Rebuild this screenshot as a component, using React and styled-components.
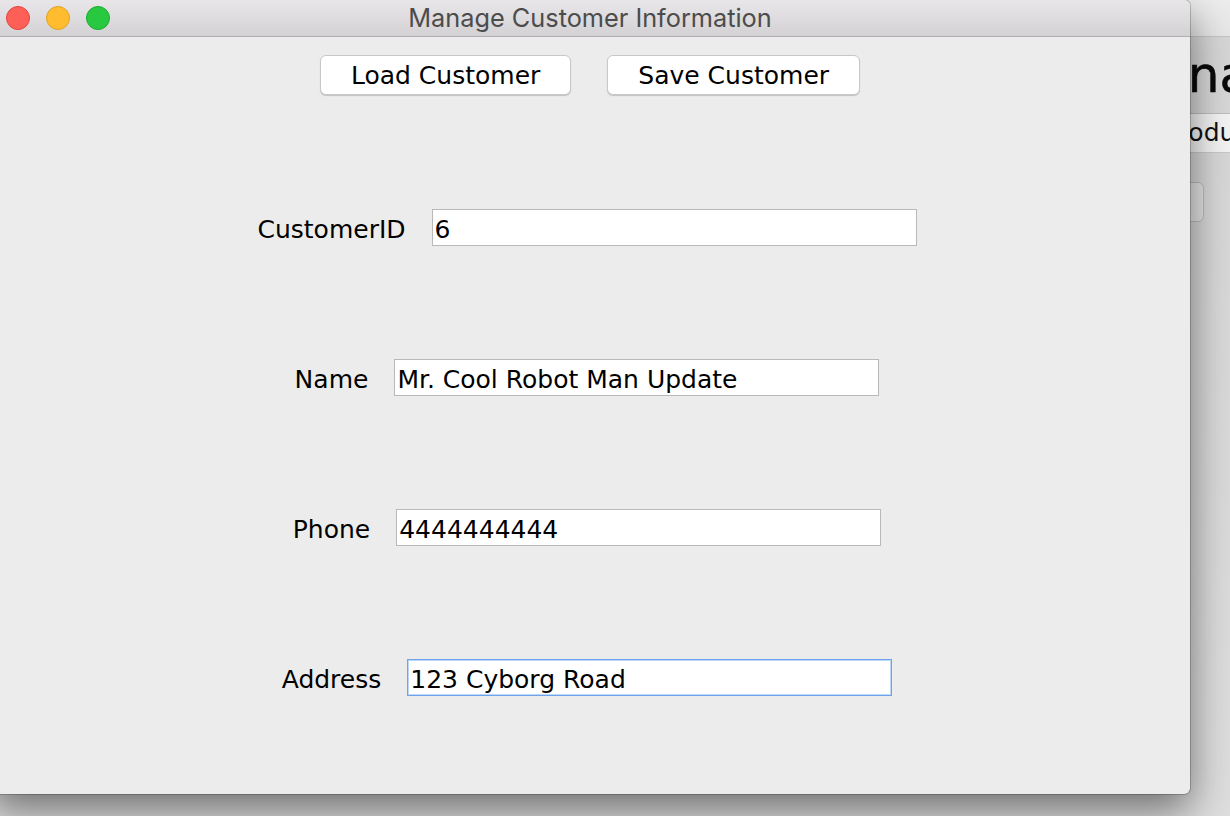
import React from 'react';
import styled, { createGlobalStyle } from 'styled-components';

const GlobalStyle = createGlobalStyle`
  html, body {
    margin: 0;
    padding: 0;
    background: #d8d8d8;
    overflow: hidden;
  }
`;

const Desktop = styled.div`
  position: relative;
  width: 1230px;
  height: 816px;
  overflow: hidden;
  font-family: 'DejaVu Sans', 'Liberation Sans', sans-serif;
`;

/* window sitting behind the dialog, mostly hidden */
const BackWindow = styled.div`
  position: absolute;
  inset: 0;
  display: flex;
  flex-direction: column;
  align-items: flex-start;
  background: linear-gradient(180deg, #d6d6d6 0%, #dadada 60%, #dedede 100%);
`;

const BackTitleBar = styled.div`
  align-self: stretch;
  height: 36px;
  background: linear-gradient(180deg, #ededed, #e6e6e6);
  border-bottom: 1px solid #c4c4c4;
`;

const BackHeading = styled.div`
  margin: 8px 0 0 ${(p) => p.indent}px;
  font-size: 50px;
  line-height: 60px;
  color: #0a0a0a;
  white-space: nowrap;
  -webkit-text-stroke: 0.6px #0a0a0a;
`;

const BackField = styled.div`
  align-self: stretch;
  margin-top: 8px;
  padding-left: ${(p) => p.indent}px;
  height: 38px;
  line-height: 38px;
  font-size: 25px;
  color: #111;
  background: #f3f3f3;
  border-top: 1px solid #bdbdbd;
  border-bottom: 1px solid #c9c9c9;
  white-space: nowrap;
`;

const BackButton = styled.div`
  margin: 29px 0 0 ${(p) => p.indent}px;
  width: 160px;
  height: 38px;
  border-radius: 6px;
  background: #e4e4e4;
  border: 1px solid #bcbcbc;
`;

const Window = styled.div`
  position: relative;
  z-index: 1;
  margin-left: -10px;
  width: 1200px;
  height: 794px;
  background: #ececec;
  border-radius: 0 6px 6px 6px;
  box-shadow: 0 16px 40px rgba(0, 0, 0, 0.5), 0 0 0 1px rgba(0, 0, 0, 0.2);
  display: flex;
  flex-direction: column;
`;

const TitleBar = styled.div`
  height: 36px;
  display: grid;
  grid-template-columns: 1fr auto 1fr;
  align-items: center;
  background: linear-gradient(180deg, #e8e6e8 0%, #dcdadc 60%, #d3d1d3 100%);
  border-bottom: 1px solid #b0b0b0;
  border-radius: 0 6px 0 0;
`;

const Lights = styled.div`
  display: flex;
  gap: 16px;
  padding-left: 16px;
`;

const Light = styled.span`
  width: 22px;
  height: 22px;
  border-radius: 50%;
  background: ${(p) => p.fill};
  border: 1px solid ${(p) => p.edge};
`;

const Title = styled.div`
  font-family: Inter, 'Liberation Sans', sans-serif;
  font-size: 25.3px;
  color: #4c4c4c;
  padding-bottom: 2px;
`;

const Content = styled.div`
  flex: 1;
  display: flex;
  flex-direction: column;
  align-items: center;
  padding-top: 18px;
`;

const ButtonRow = styled.div`
  display: flex;
  gap: 36px;
`;

const Button = styled.button`
  height: 40px;
  padding: 0 30px;
  font-family: 'DejaVu Sans', sans-serif;
  font-size: 25px;
  color: #000;
  background: #fff;
  border: 1px solid #c8c8c8;
  border-radius: 6px;
  box-shadow: 0 1px 1px rgba(0, 0, 0, 0.18);
  cursor: pointer;
`;

const FormRow = styled.div`
  margin-top: ${(p) => p.top}px;
  margin-right: 6px;
  display: flex;
  align-items: center;
  gap: 26px;
`;

const Label = styled.label`
  padding-top: 3px;
  font-size: 25px;
  color: #000;
`;

const Field = styled.input`
  box-sizing: border-box;
  width: 485px;
  height: 37px;
  padding: 3px 2px 0;
  font-family: 'DejaVu Sans', sans-serif;
  font-size: 25px;
  color: #000;
  background: #fff;
  border: 1px solid ${(p) => (p.focused ? '#6ea4ee' : '#b9b9b9')};
  box-shadow: ${(p) => (p.focused ? 'inset 0 0 0 1px #bcd6f7' : 'none')};
  outline: none;
`;

const fields = [
  { label: 'CustomerID', value: '6', top: 114 },
  { label: 'Name', value: 'Mr. Cool Robot Man Update', top: 113 },
  { label: 'Phone', value: '4444444444', top: 113 },
  { label: 'Address', value: '123 Cyborg Road', top: 113, focused: true },
];

const App = () => {
  return (
    <Desktop>
      <GlobalStyle />
      <BackWindow>
        <BackTitleBar />
        <BackHeading indent={1114}>Management</BackHeading>
        <BackField indent={1164}>Products</BackField>
        <BackButton indent={1042} />
      </BackWindow>

      <Window>
        <TitleBar>
          <Lights>
            <Light fill="#fe5f57" edge="#e2463f" />
            <Light fill="#febc2e" edge="#e1a325" />
            <Light fill="#28c840" edge="#1dac2b" />
          </Lights>
          <Title>Manage Customer Information</Title>
          <div />
        </TitleBar>
        <Content>
          <ButtonRow>
            <Button>Load Customer</Button>
            <Button>Save Customer</Button>
          </ButtonRow>
          {fields.map((f) => (
            <FormRow key={f.label} top={f.top}>
              <Label>{f.label}</Label>
              <Field defaultValue={f.value} focused={f.focused} readOnly />
            </FormRow>
          ))}
        </Content>
      </Window>
    </Desktop>
  );
};

export default App;
